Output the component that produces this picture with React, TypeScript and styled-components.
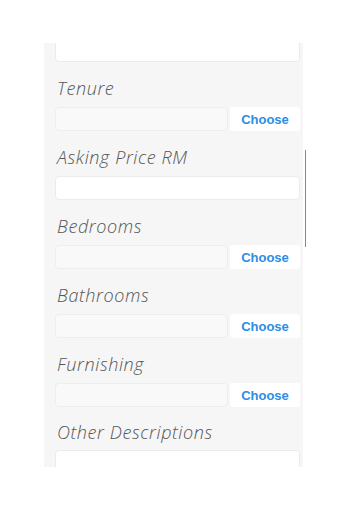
import React from "react";
import styled, { createGlobalStyle } from "styled-components";

const GlobalStyle = createGlobalStyle`
  body {
    margin: 0;
    background: #ffffff;
    font-family: "Open Sans", "Liberation Sans", sans-serif;
  }
`;

const Page = styled.div`
  position: relative;
  width: 349px;
  height: 512px;
  padding-top: 43px;
  box-sizing: border-box;
`;

const Panel = styled.div`
  margin-left: 44px;
  width: 259px;
  height: 424px;
  overflow: hidden;
  background: #f6f6f6;
`;

const Scroller = styled.div`
  margin-top: -5px;
  padding: 0 3px 0 11px;
`;

const ScrollThumb = styled.div`
  position: absolute;
  left: 305px;
  top: 150px;
  width: 1px;
  height: 97px;
  background: #8a8a8a;
`;

const Field = styled.div`
  display: flex;
  flex-direction: column;
`;

const Label = styled.div<{ $tight?: boolean }>`
  margin: ${(p) => (p.$tight ? "13px 0 6px 2px" : "14px 0 7px 2px")};
  height: 24px;
  line-height: 24px;
  font-size: 18px;
  font-weight: 300;
  letter-spacing: 0.6px;
  font-style: italic;
  color: #555555;
`;

const TextInput = styled.div<{ $tall?: boolean }>`
  height: ${(p) => (p.$tall ? "60px" : "24px")};
  background: #ffffff;
  border: 1px solid #ebebeb;
  border-radius: 4px;
  box-sizing: border-box;
`;

const PickerRow = styled.div`
  display: flex;
  gap: 2px;
  height: 24px;
`;

const PickerInput = styled.div`
  flex: 1;
  background: #f9f9f9;
  border: 1px solid #eeeeee;
  border-radius: 4px;
  box-sizing: border-box;
`;

const ChooseButton = styled.button`
  width: 70px;
  border: none;
  border-radius: 3px;
  background: #ffffff;
  color: #2b8de6;
  font-family: "Liberation Sans", Arial, sans-serif;
  font-size: 13px;
  font-weight: 700;
  padding: 0;
  cursor: pointer;
`;

const fields: { label: string; picker: boolean }[] = [
  { label: "Tenure", picker: true },
  { label: "Asking Price RM", picker: false },
  { label: "Bedrooms", picker: true },
  { label: "Bathrooms", picker: true },
  { label: "Furnishing", picker: true },
];

const App: React.FC = () => {
  return (
    <Page>
      <GlobalStyle />
      <Panel>
        <Scroller>
          <TextInput />
          {fields.map(({ label, picker }) => (
            <Field key={label}>
              <Label>{label}</Label>
              {picker ? (
                <PickerRow>
                  <PickerInput />
                  <ChooseButton>Choose</ChooseButton>
                </PickerRow>
              ) : (
                <TextInput />
              )}
            </Field>
          ))}
          <Field>
            <Label $tight>Other Descriptions</Label>
            <TextInput $tall />
          </Field>
        </Scroller>
      </Panel>
      <ScrollThumb />
    </Page>
  );
};

export default App;
